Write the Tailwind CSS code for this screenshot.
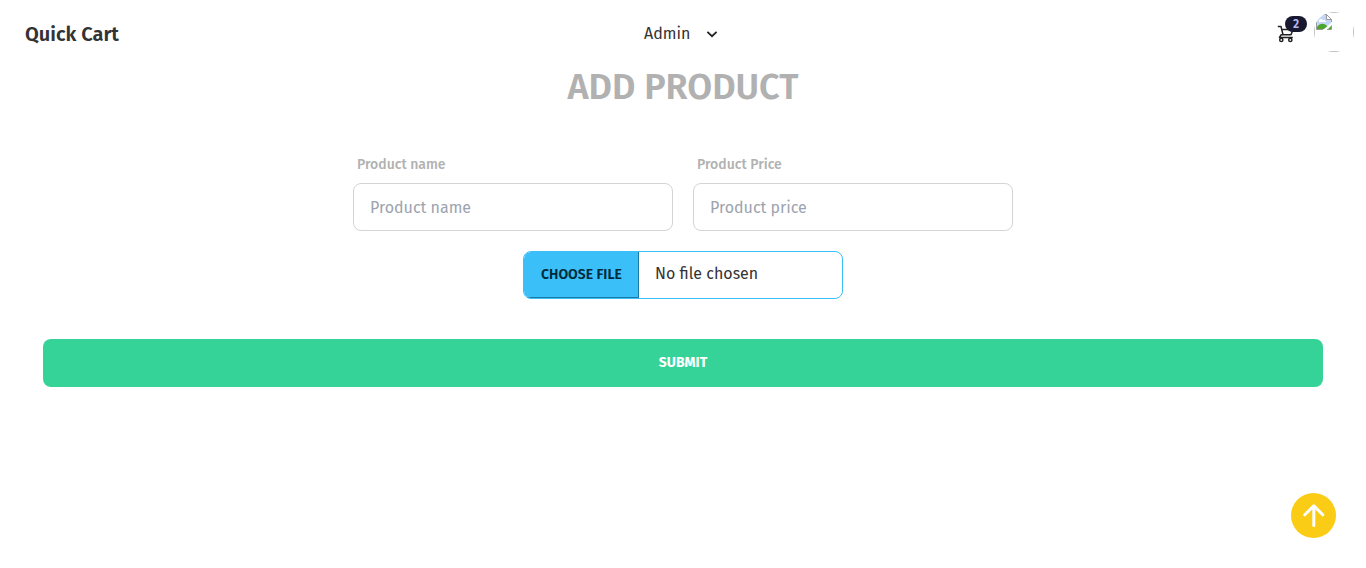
<!DOCTYPE html>
<html lang="en">
<head>
<meta charset="utf-8">
<title>Quick Cart</title>
<script src="https://cdn.jsdelivr.net/npm/@tailwindcss/browser@4"></script>
</head>
<body class="relative h-[568px] overflow-hidden bg-white font-['Fira_Sans','Noto_Sans',sans-serif] text-[#333]">
<header class="grid h-16 grid-cols-3 items-center pl-[25px] pr-3">
  <div class="pt-1 text-xl leading-7 font-semibold whitespace-nowrap">Quick Cart</div>
  <nav class="flex items-center pt-1 pl-[176px]">
    <span class="w-[62px]">Admin</span>
    <svg class="h-3 w-3" viewBox="0 0 12 12" fill="none" stroke="#222" stroke-width="1.8"><path d="M1.4 3.8 6 8.2 10.6 3.8"/></svg>
  </nav>
  <div class="flex items-center justify-end">
    <div class="relative mr-[7px] h-10 w-[30px]">
      <svg class="absolute top-[13px] left-0 h-[19px] w-5" viewBox="0 0 20 19" fill="none" stroke="#222" stroke-width="1.5" stroke-linejoin="round"><path d="M.8 1.5H4l2 8.2h8l2-5.2H5M6 9.7H4.2L2.5 12.5H15.8"/><circle cx="4.3" cy="14.9" r="1.6"/><circle cx="13.3" cy="14.9" r="1.6"/></svg>
      <span class="absolute top-1 left-2 flex h-4 w-[22px] items-center justify-center rounded-full bg-[#181830] text-xs leading-4 font-semibold text-[#b5b7f5]">2</span>
    </div>
    <div class="h-10 w-10 overflow-hidden rounded-full">
      <div class="h-10 w-10 border border-[#c0c0c0]">
        <svg class="mt-px ml-px h-4 w-4" viewBox="0 0 16 16"><path d="M.5.5h10l5 5v10H.5z" fill="#c3d6f8"/><path d="M3 7c0-2 3-3 4-1 2-.5 3 1 3 2H3z" fill="#fff"/><path d="M1 15v-2c3-4 7-4 10-1l4 0v3z" fill="#4ca52e"/><path d="m7 16 9-8v3l-5 5z" fill="#fff"/><path d="M10.5.5v5h5z" fill="#fff"/><path d="M7 15.5H.5V.5h10l5 5V8M15.5 11.5v4H11M10.5.5v5h5" fill="none" stroke="#999"/></svg>
      </div>
    </div>
  </div>
</header>
<main class="flex flex-col items-center">
  <h1 class="flex h-[46px] items-center justify-center text-4xl font-semibold whitespace-nowrap text-[#b1b1b1]">ADD PRODUCT</h1>
  <form class="flex w-full flex-col items-center pt-[35px]">
    <div class="flex gap-5">
      <label class="w-80"><span class="flex h-[38px] items-center px-1 pt-0.5 text-sm font-medium text-[#b1b1b1]">Product name</span><span class="flex h-12 items-center rounded-lg border border-[#d4d4d4] px-4 pt-0.5 text-[#9ca3af]">Product name</span></label>
      <label class="w-80"><span class="flex h-[38px] items-center px-1 pt-0.5 text-sm font-medium text-[#b1b1b1]">Product Price</span><span class="flex h-12 items-center rounded-lg border border-[#d4d4d4] px-4 pt-0.5 text-[#9ca3af]">Product price</span></label>
    </div>
    <div class="mt-5 flex h-12 w-80 overflow-hidden rounded-lg border border-[#3abff8]">
      <span class="flex w-[115px] items-center justify-center border-r border-b border-[#197aa5] bg-[#3abff8] pl-px text-sm font-semibold whitespace-nowrap text-[#002b3d]">CHOOSE FILE</span>
      <span class="flex items-center pb-0.5 pl-4">No file chosen</span>
    </div>
    <button type="button" class="mt-10 h-12 w-[1280px] rounded-lg bg-[#36d399] text-sm font-bold text-white">SUBMIT</button>
  </form>
</main>
<div class="absolute top-[493px] left-[1291px] flex h-[45px] w-[45px] items-center justify-center rounded-full bg-[#facc15]">
  <svg class="h-6 w-6" viewBox="0 0 24 24" fill="none" stroke="#fff" stroke-width="3" stroke-linecap="round" stroke-linejoin="round"><path d="M11.8 21.5V1.8M2.8 10.8l9-9 9 9"/></svg>
</div>
</body>
</html>
